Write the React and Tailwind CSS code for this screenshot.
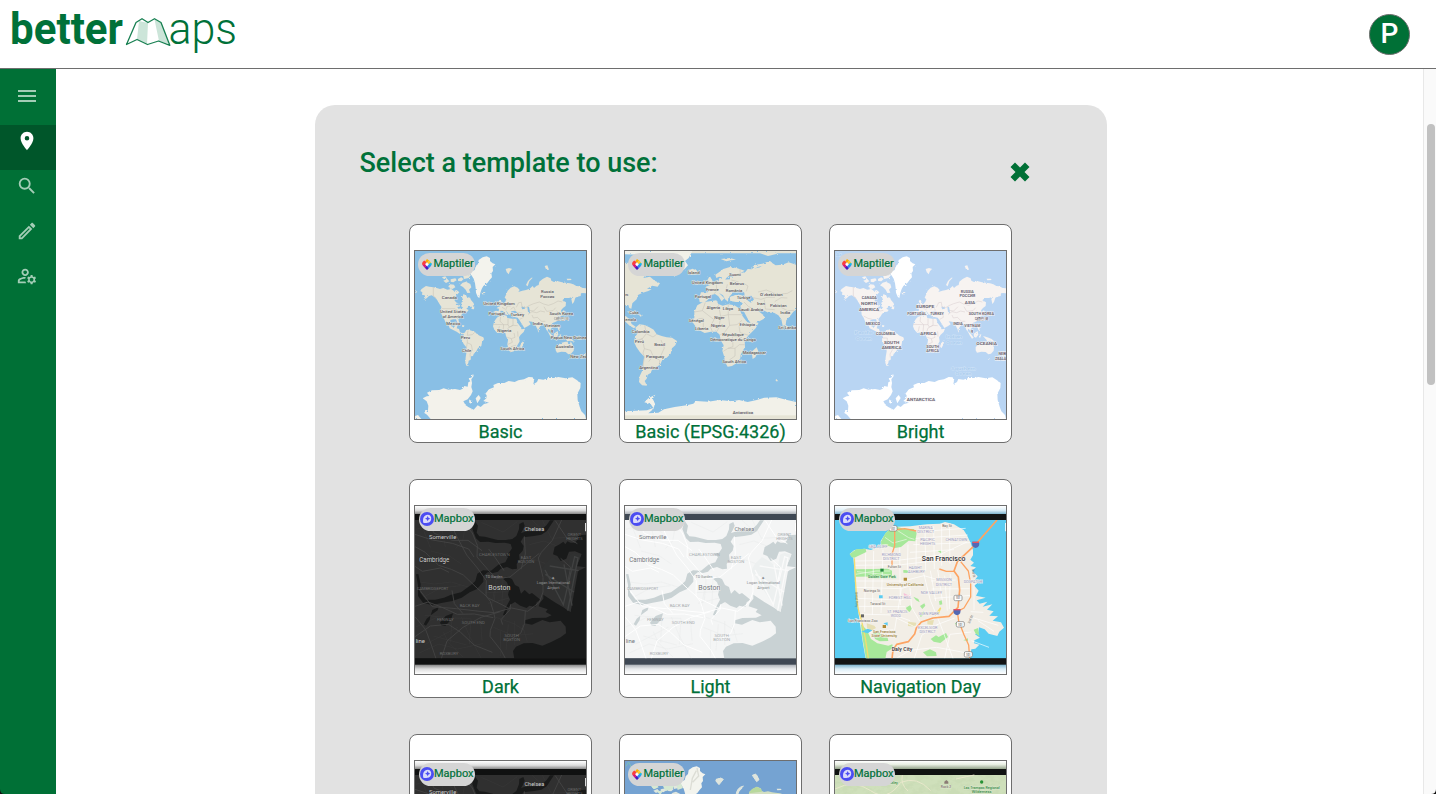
import React from 'react';
import { MdMenu, MdPlace, MdSearch, MdOutlineEdit, MdOutlineManageAccounts } from 'react-icons/md';

// Label rows: [centre x, baseline y, text, drawn width, optional size]
function Labels({ items, fill, halo, weight = 500, size = 12 }) {
  return (
    <g fontFamily="Roboto, sans-serif" textAnchor="middle" fill={fill} fontWeight={weight} stroke={halo} strokeWidth={halo ? 2.5 : 0} style={{ paintOrder: 'stroke' }}>
      {items.map(([x, y, t, w, s]) => (
        <text key={t + x + y} x={x} y={y} fontSize={s || size} textLength={w} lengthAdjust="spacingAndGlyphs">{t}</text>
      ))}
    </g>
  );
}

const AMERICAS =
  'M52 214L58 209 66 204 76 206 88 208 98 210 108 213 118 210 130 215 142 213 150 219 158 216 166 223 158 231 152 238 152 248 158 254 166 256 168 265 172 264 172 254 178 248 174 238 178 229 186 231 190 240 197 236 201 246 208 254 211 260 203 266 193 267 187 272 194 276 190 281 180 282 174 288 170 295 163 303 165 312 164 318 159 312 156 304 147 304 139 307 138 315 142 325 150 328 155 321 161 321 158 331 165 333 168 343 176 346 182 344 187 336 193 335 203 338 212 341 219 348 227 353 238 358 240 364 234 373 232 384 222 390 216 401 209 408 207 414 201 415 200 425 194 428 193 435 189 440 196 444 187 443 184 434 185 418 188 400 187 388 179 378 174 367 175 358 180 349 168 348 158 341 146 335 137 331 133 319 126 308 126 315 130 320 124 312 119 299 113 290 112 278 112 266 106 257 99 245 92 238 83 232 75 234 68 241 58 247 64 240 62 232 54 230 55 223 49 219z';
const GREENLAND = 'M196 164L205 159 212 156 215 145 222 138 224 126 236 118 248 115 258 120 258 129 266 136 274 139 266 147 267 159 262 166 264 178 256 187 250 195 238 204 233 213 229 225 226 240 221 236 216 224 215 210 213 196 209 182 202 171z';
const ISLES =
  'M118 188L130 183 136 190 126 195zM133 205L139 199 150 200 154 208 145 213 136 211zM163 182L172 178 179 183 172 190 162 189zM177 172L190 165 201 171 194 180 180 183zM176 194L186 191 199 198 202 208 195 215 199 224 190 225 185 215 177 207 168 202zM140 184L154 181 158 187 148 193 140 191zM114 178L124 175 128 180 118 182zM204 267L211 265 210 274 202 273zM233 223L244 222 242 229 234 229zM305 153L315 150 325 153 318 159 314 169 308 162zM366 201L372 189 382 179 386 179 376 190 371 205zM422 144L430 142 435 155 427 156zM488 182L500 182 503 186 490 187zM33 216L40 222 34 225zM284 250L289 244 293 253 297 264 286 268 290 260zM279 259L285 256 284 263 279 264zM352 375L361 366 358 380 352 391 348 385zM431 339L441 348 449 359 444 362 437 352zM449 347L461 339 463 350 456 359 450 356zM466 350L472 349 468 361 465 356zM461 322L467 330 466 338 462 334zM477 354L490 358 503 363 513 372 499 368 490 370 483 361zM461 291L468 288 476 281 480 275 482 284 476 292 465 297zM154 315L165 316 171 322 163 320zM174 322L181 322 180 327 174 326zM401 335L405 338 403 344zM541 404L546 407 538 420 532 424 539 413zM492 420L497 421 494 427z';
const EURASIA =
  'M268 281L276 278 284 280 285 272 278 271 282 267 292 263 298 258 304 251 307 244 302 239 307 228 311 218 320 209 331 205 341 209 347 216 343 222 355 218 366 216 377 212 386 204 390 210 398 203 404 201 406 191 416 183 429 176 440 181 442 188 450 192 462 190 474 193 485 194 498 196 508 199 517 204 526 205 536 210 546 211 546 226 537 225 531 226 530 234 520 236 514 239 510 252 505 258 502 243 508 236 495 240 483 240 475 247 486 253 485 264 477 270 471 277 473 287 466 283 460 281 455 287 462 293 464 301 461 308 452 313 444 316 447 326 441 332 439 339 433 331 431 340 436 348 426 334 424 324 417 317 409 324 402 337 396 325 394 315 384 311 374 310 380 319 371 325 361 330 354 319 346 306 341 299 331 297 324 298 322 289 326 286 335 286 342 285 333 278 322 280 320 288 315 291 309 281 305 277 312 290 305 290 297 279 290 278 287 287 277 292 269 290z M318 249L323 245 322 235 329 224 335 220 333 232 341 238 335 246 325 247 322 255 312 260 315 252z';
const AFRICA = 'M282 296L297 292 308 293 310 300 325 302 337 302 341 315 348 325 353 334 363 332 359 342 350 350 345 358 347 370 341 380 337 388 330 400 319 403 314 395 310 379 312 367 306 354 304 345 292 343 280 345 271 335 267 325 270 312 276 302z';
const AUSTRALIA = 'M455 387L464 379 473 374 484 371 492 371 491 377 498 379 500 370 505 379 510 388 509 398 501 407 493 409 485 402 472 401 459 404 455 397z';
const ANTARCTICA =
  'M80 603L69 590 60 584 72 577 73 563 68 550 56 541 68 535 76 534 69 524 84 517 106 516 119 511 133 515 153 513 168 516 176 512 181 504 191 506 193 493 199 490 194 482 203 478 207 467 209 474 202 484 204 495 202 507 206 520 201 531 191 544 178 550 185 562 194 568 209 575 221 562 230 567 240 558 255 554 238 549 247 541 248 532 244 527 255 514 270 508 268 501 282 495 301 495 314 489 332 492 343 487 360 484 374 477 386 478 390 488 388 499 399 492 403 483 418 485 433 480 450 480 463 477 485 481 505 478 518 486 530 495 529 510 520 527 521 546 527 566 532 580 543 591 546 603z M195 546L205 548 203 558 196 554zM215 541L224 531 230 540 220 556z M33 594L42 591 52 603 33 603z';
const BORDERS =
  'M88 207L88 234 97 241M113 272L152 272 163 280 178 277M119 294L132 301 145 304M192 338L190 352 205 350 212 343M176 360L190 360 190 374 202 380 205 396 198 408 199 419M190 374L187 390M290 296L288 310 299 320 312 320 312 301M327 302L327 322 316 327 312 320M267 319L299 320M283 340L286 325M299 320L297 341M308 342L312 330 327 322 341 323M310 358L322 362 325 373 312 379M330 345L333 358 322 362M320 402L321 386 334 382M341 340L342 356M337 268L344 254 352 253 354 267 365 269 377 262 389 257 406 252 419 258 433 262 448 257 462 249 475 252M372 289L384 281 398 284 410 279 423 282M374 277L389 279 402 266M384 291L388 300 400 298 413 310 424 310M420 266L428 280 447 278 455 269M337 283L356 286 358 298 347 304M320 274L329 267 334 277M305 276L310 264 320 264M294 268L303 273';

function WorldMap({ bright }) {
  const land = bright ? '#f7f3f1' : '#e6e4d6';
  return (
    <svg viewBox="33 99 513 504" className="block size-full">
      <defs>
        <filter id={bright ? 'coastB' : 'coastA'} x="0" y="0" width="100%" height="100%">
          <feTurbulence type="fractalNoise" baseFrequency="0.16" numOctaves="2" seed="4" />
          <feDisplacementMap in="SourceGraphic" scale="7" />
        </filter>
      </defs>
      <rect x="33" y="99" width="513" height="504" fill={bright ? '#b9d5f3' : '#89bfe5'} />
      <g filter={bright ? 'url(#coastB)' : 'url(#coastA)'}>
        <g fill={land}>
          <path d={AMERICAS} /><path d={ISLES} /><path d={EURASIA} /><path d={AFRICA} /><path d={AUSTRALIA} />
        </g>
        <path d={GREENLAND} fill={bright ? '#fff' : '#f3f3ed'} />
        <path d={ANTARCTICA} fill={bright ? '#fff' : '#f3f2eb'} />
        <path d="M155 258l11-3 4 5-13 1zM352 267l9-2 2 7-8 2zM370 267l5 0 3 14-6 1zM160 267l12-2 6 5-15 2z" fill={bright ? '#b9d5f3' : '#89bfe5'} />
      </g>
      <path d={BORDERS} fill="none" stroke={bright ? '#d9cecf' : '#c6c2b8'} strokeWidth="1.6" />
      {bright ? (
        <>
          <Labels weight={700} fill="#6a6774" halo="#f8f5f5" size={12} items={[
            [136, 243, 'CANADA', 45, 10], [135, 262, 'NORTH', 48, 13], [135, 278, 'AMERICA', 60, 13], [147, 321, 'MEXICO', 44, 10], [185, 350, 'COLOMBIA', 58, 10],
            [203, 377, 'SOUTH', 46, 13], [203, 393, 'AMERICA', 60, 13], [304, 270, 'EUROPE', 54, 13], [278, 291, 'PORTUGAL', 57, 10], [339, 292, 'TURKEY', 41, 10],
            [313, 352, 'AFRICA', 48, 13], [326, 389, 'SOUTH', 38, 10], [326, 403, 'AFRICA', 38, 10], [430, 224, 'RUSSIA', 39, 10], [430, 238, 'РОССИЯ', 47, 11],
            [438, 258, 'ASIA', 31, 13], [472, 291, 'SOUTH KOREA', 76, 10], [472, 305, '대한민국', 40, 11], [402, 321, 'INDIA', 29, 10], [445, 328, 'VIETNAM', 48, 10], [444, 341, 'g', 6, 10],
            [488, 382, 'OCEANIA', 62, 12], [535, 412, 'NEW', 23, 10], [530, 425, 'ZEALA', 34, 10], [291, 549, 'ANTARCTICA', 85, 12]]} />
          <Labels fill="#a9cbed" halo="#cfe3f8" size={13} items={[[119, 348, 'Pacific', 55], [119, 365, 'Ocean', 48], [390, 361, 'Indian', 49], [390, 378, 'Ocean', 48], [418, 455, 'Southern', 74], [418, 471, 'Ocean', 48], [44, 115, 'Ar', 16]]} />
        </>
      ) : (
        <Labels fill="#5b5960" halo="#e9e9e1" size={11.5} items={[
          [136, 244, 'Canada', 45], [147, 285, 'United States', 78], [147, 299, 'of America', 62], [148, 321, 'Mexico', 42], [184, 363, 'Peru', 28], [188, 402, 'Chile', 28],
          [285, 261, 'United Kingdom', 95], [278, 291, 'Portugal', 49], [340, 294, 'Turkey', 41], [301, 341, 'Nigeria', 42], [325, 397, 'South Africa', 72],
          [430, 225, 'Russia', 38], [430, 239, 'Россия', 42], [472, 291, 'South Korea', 71], [472, 306, '대한민국', 46], [401, 321, 'India', 30], [445, 328, 'Vietnam', 48], [444, 342, 'g', 6],
          [494, 362, 'Papua New Guinea', 107], [482, 391, 'Australia', 53], [524, 419, 'New Zea', 51]]} />
      )}
    </svg>
  );
}

function PlateMap() {
  return (
    <svg viewBox="33 99 513 504" className="block size-full">
      <defs>
        <filter id="coastC" x="0" y="0" width="100%" height="100%">
          <feTurbulence type="fractalNoise" baseFrequency="0.15" numOctaves="2" seed="8" />
          <feDisplacementMap in="SourceGraphic" scale="7" />
        </filter>
      </defs>
      <rect x="33" y="99" width="513" height="504" fill="#89bfe5" />
      <g filter="url(#coastC)" fill="#e6e4d6">
        <path d="M20 135L40 134 54 143 60 138 80 132 98 140 112 150 126 157 120 166 104 162 95 171 88 180 108 176 122 188 138 196 131 206 115 203 99 212 113 214 103 219 84 225 72 231 68 244 55 256 52 272 46 270 43 261 20 262zM62 177L82 173 92 183 86 194 80 205 76 195 65 187z" />
        <path d="M38 281L52 280 73 288 56 288zM73 289L87 291 80 296zM20 286L38 296 48 306 53 318 65 326 60 331 47 323 33 310 20 306z" />
        <path d="M64 329L76 319 92 321 106 328 119 335 128 349 143 354 158 358 174 359 189 369 184 382 174 391 170 407 158 419 145 425 138 441 125 447 114 455 110 465 101 470 98 482 92 489 99 503 84 502 75 492 77 475 84 460 87 435 91 416 78 403 67 387 60 371 63 357 71 346z" />
        <path d="M250 262L266 253 288 250 307 247 313 258 326 263 343 259 361 262 374 270 386 295 399 312 411 316 434 314 425 331 404 352 392 367 393 387 386 399 380 410 379 421 365 437 354 444 341 446 334 434 330 414 325 398 329 382 320 367 317 350 308 341 291 341 272 345 256 337 246 327 236 313 241 299 241 281z" />
        <path d="M413 401L428 388 433 400 424 418 416 423zM255 241L261 223 282 223 286 215 273 207 291 200 302 191 314 190 315 180 326 185 348 184 348 177 360 174 354 166 337 180 331 188 321 186 324 178 315 176 307 180 304 170 315 163 328 153 348 147 368 150 392 158 379 166 394 162 401 153 412 154 438 148 451 137 466 130 485 142 505 140 524 133 546 140 546 275 538 281 530 292 517 307 515 321 506 323 502 304 493 292 480 284 463 284 446 276 433 279 451 293 450 302 428 314 412 319 402 304 390 281 379 266 383 252 366 252 349 249 347 238 355 233 371 229 391 233 390 224 376 219 369 221 364 215 354 227 348 234 343 240 342 251 333 244 327 232 315 225 331 241 323 250 313 235 303 228 292 231 282 245 270 254 257 252z" />
        <path d="M280 187L287 174 294 185 299 198 284 202 287 193zM267 193L278 188 278 198 269 199zM222 158L235 152 251 158 246 168 230 170zM320 123L348 120 366 125 351 127 337 130zM410 151L424 140 445 137 468 129 476 136 455 141 431 147 420 154zM438 106L476 102 490 107 462 114zM513 321L522 325 519 334 512 330zM486 482L493 490 485 489zM33 99H546V106H33z" />
        <path d="M33 99H235L224 120 213 129 222 142 212 153 195 164 182 176 171 160 150 150 128 133 98 111 33 109z" fill="#f1f1e9" />
        <path d="M395 236L412 233 420 244 411 254 400 247zM355 222L377 216 391 224 391 234 369 228 354 235z" fill="#89bfe5" />
        <path d="M33 580L68 578 99 577 118 570 110 558 91 553 104 540 124 530 116 542 123 557 118 573 103 586 133 584 150 574 182 567 218 562 238 557 246 549 282 551 316 546 354 550 375 546 401 552 428 546 451 539 487 538 516 545 546 552V603H33z" fill="#f2f1e9" />
      </g>
      <rect x="33" y="592" width="513" height="11" fill="#e6e4d6" />
      <path d="M92 322L97 347 85 362 66 374M128 349L117 357 97 347M61 369L85 362 91 392 110 397 117 414 104 431M91 392L87 405 91 416 86 454M117 414L137 427 136 441M141 366L151 390 140 414M274 253L265 278 300 305 320 295 313 259M343 260L343 290 320 295M343 290L383 290M241 282L265 278M300 305L289 325 295 341M320 295L315 329 308 341M251 302L268 301 268 331M343 290L347 322 369 320 384 307M347 322L332 343 318 351M355 353L357 386 342 391M384 359L356 354M375 323L378 344 404 352M328 400L342 391 363 391 363 414 346 426M363 391L376 380 392 380M366 202L389 196 402 204 397 220M432 222L457 216 489 229 520 226 535 218M390 252L404 266 431 277M417 239L441 244 459 238 483 238M451 245L454 273 482 275M482 251L501 239 520 240M501 268L520 278 540 277M340 199L336 216 349 225M307 196L308 218 300 228M374 192L352 186M357 173L379 166 378 153" fill="none" stroke="#c7c3b9" strokeWidth="1.6" />
      <Labels fill="#5b5960" halo="#e9e9e1" size={11.5} items={[
        [239, 168, 'Ísland', 36], [363, 174, 'Suomi', 35], [280, 197, 'United Kingdom', 93], [369, 201, 'Belarus', 43], [295, 220, 'France', 38], [360, 221, 'România', 49],
        [267, 239, 'Portugal', 49], [389, 242, 'Türkiye', 42], [472, 235, 'Oʻzbekiston', 68], [441, 260, 'Iran', 24], [493, 266, 'Pakistan', 50], [298, 274, 'Algeria', 41], [342, 277, 'Libya', 31],
        [410, 280, 'Saudi Arabia', 74], [514, 289, 'India', 30], [316, 303, 'Niger', 31], [247, 312, 'Sénégal', 45], [312, 326, 'Nigeria', 42], [400, 324, 'Ethiopia', 47], [263, 337, 'Liberia', 40],
        [520, 332, 'Sri Lanka', 54], [357, 354, 'République', 65], [357, 369, 'Démocratique du Congo', 137], [421, 408, 'Madagascar', 70], [361, 436, 'South Africa', 71],
        [80, 344, 'Colombia', 53], [76, 374, 'Perú', 27], [137, 383, 'Brasil', 33], [123, 420, 'Paraguay', 54], [104, 453, 'Argentina', 57], [60, 288, 'Cuba', 28], [50, 308, 'emala', 32], [38, 233, 'es', 9], [387, 588, 'Antarctica', 61]]} />
    </svg>
  );
}

const WATER =
  'M212 140L222 155 218 176 226 187 243 188 260 193 281 198 306 198 325 195 337 186 345 166 346 150 358 144 362 155 356 169 351 177 372 171 395 171 415 165 428 153 438 139 450 139 437 158 429 171 412 182 390 186 358 190 350 203 359 216 356 230 345 242 347 257 338 270 339 284 325 286 309 279 290 284 282 293 267 297 252 294 238 306 238 323 219 345 197 355 173 371 145 381 116 386 84 393 57 386 42 366 42 333 36 301 43 300 50 331 48 355 65 377 94 377 120 371 141 362 171 355 201 333 214 321 220 299 237 289 261 290 285 271 304 265 312 249 300 239 315 236 324 223 320 210 302 206 275 207 253 203 228 204 216 193 205 165zM546 182L526 184 519 178 524 192 513 206 500 206 490 202 484 211 478 203 467 211 452 219 447 241 460 246 470 261 487 254 495 233 513 232 533 240 525 260 515 276 546 280zM546 280L522 291 500 413 451 384 418 362 418 374 407 388 404 397 431 406 425 414 443 424 426 431 385 432 363 439 362 448 384 452 415 438 437 445 470 440 485 458 486 478 470 490 440 505 415 515 386 507 359 508 336 518 327 531 331 554 546 554zM316 344L309 325 298 315 309 308 324 315 333 333 345 339 351 359 362 348 376 361 384 357 402 371 409 377 398 385 394 399 376 395 368 402 349 395 333 384 321 391 312 402 303 426 297 422 308 396 318 377 312 362zM59 451L68 434 79 425 77 438 66 455zM108 446L125 426 147 418 142 436 124 456 113 455zM85 408L104 399 101 409 80 424z';
const ROADS =
  'M33 218L64 235 104 274 142 286 178 303 219 342 254 373 294 392 312 402M139 139L153 177 188 243 220 282 247 320 246 366 259 382 268 412 273 433 259 469 258 487 291 529 304 553M44 344L85 398 157 404 219 411 271 416 323 402 371 412 406 385 417 354 417 310 403 252 412 235 445 199 473 138M173 139L205 177 220 214 219 249 251 286 277 314 318 309 352 281 406 238M33 277L55 292 109 282 135 295M33 397L72 384 112 399 160 421 211 420 268 431M33 488L79 456 133 451 170 475 210 513 265 535M112 554L129 501 177 460 231 430 289 413M33 428L65 467 80 507 96 554M144 349L151 389 177 419M320 391L318 407 291 437 296 452M364 410L362 448 350 478 309 502M361 187L364 240 351 286M254 225L273 250 300 290M33 181L85 198 145 208 194 225 210 249M67 139L91 178 145 199 192 199 234 230M470 253L500 280 490 330M454 140L487 190 520 209';
const STREETS =
  'M36 166L97 149 145 176M81 231L135 245 172 270M39 323L91 330 142 324 215 346M55 371L110 342 170 335M62 424L139 432 201 433M46 537L105 510 160 525 237 509M118 473L133 506 177 549M144 422L140 505M172 429L196 485 232 554M201 434L196 511M229 430L234 500M64 511L163 459M88 486L188 513M35 459L99 430M268 460L330 485 387 479M276 430L330 449 361 469M290 469L289 547M313 451L306 529M332 441L332 513M355 453L370 504M232 145L297 174 340 143M384 139L411 163M376 212L420 201 474 222M370 250L447 276M415 138L442 193 495 190M185 151L176 201 154 224M110 145L124 219M52 151L79 221M277 331L309 342 335 389M245 356L311 353M252 388L321 371M262 401L272 344M277 305L271 380M297 311L294 391';

function BostonMap({ dark }) {
  const land = dark ? '#303030' : '#f4f5f5';
  const water = dark ? '#191a1a' : '#c9d2d4';
  const road = dark ? '#444444' : '#ffffff';
  return (
    <svg viewBox="33 96 513 504" className="block size-full">
      <defs>
        <linearGradient id={dark ? 'fadeD' : 'fadeL'} x1="0" y1="0" x2="0" y2="1">
          <stop offset="0" stopColor="#fff" /><stop offset=".5" stopColor={dark ? '#ddd' : '#e9ebed'} /><stop offset="1" stopColor={dark ? '#777' : '#a4a9b0'} />
        </linearGradient>
      </defs>
      <rect x="33" y="96" width="513" height="504" fill="#fff" />
      <rect x="33" y="96" width="513" height="26" fill={dark ? 'url(#fadeD)' : 'url(#fadeL)'} />
      <rect x="33" y="-600" width="513" height="30" transform="scale(1 -1)" fill={dark ? 'url(#fadeD)' : 'url(#fadeL)'} />
      <rect x="33" y="120" width="513" height="452" fill={dark ? '#101111' : '#3f4854'} />
      <svg x="33" y="138" width="513" height="415" viewBox="33 138 513 415">
        <rect x="33" y="138" width="513" height="416" fill={land} />
        <path d={STREETS} fill="none" stroke={dark ? '#3b3b3b' : '#e8eaeb'} strokeWidth="1.5" />
        <path d={WATER} fill={water} />
        <path d="M498 242L512 236 531 242 517 281 500 414 485 405 421 304 410 292 423 269 444 249 468 263 491 281z" fill={dark ? '#303131' : '#edf0f0'} />
        <path d="M423 288L478 392 512 248 522 252 491 410M437 276L524 290M424 301L510 354M480 271L504 395" fill="none" stroke={dark ? '#414242' : '#fafafa'} strokeWidth="4" />
        <path d={ROADS} fill="none" stroke={road} strokeWidth="2.7" strokeLinejoin="round" />
        <path d="M546 147V172" stroke={dark ? '#ddd' : '#fff'} strokeWidth="6" />
      </svg>
      <Labels weight={400} fill={dark ? '#d0d0d0' : '#72767c'} halo={dark ? '#2b2b2b' : '#f7f7f7'} size={17} items={[
        [391, 171, 'Chelsea', 59], [116, 194, 'Somerville', 82], [91, 265, 'Cambridge', 90, 19], [286, 348, 'Boston', 66, 23], [49, 506, 'line', 28, 16]]} />
      <Labels weight={400} fill={dark ? '#999' : '#858a8e'} size={11} items={[
        [448, 331, 'Logan International', 99, 11], [448, 344, 'Airport', 37, 11], [448, 319, '✦', 12, 14], [270, 312, 'TD Garden', 51, 10]]} />
      <Labels weight={400} fill={dark ? '#686969' : '#a7acaf'} size={12} items={[
        [271, 246, 'CHARLESTOWN', 92], [366, 255, 'EAST', 32], [366, 268, 'BOSTON', 50], [511, 185, 'ORIENT', 41], [511, 197, 'HEIGHTS', 49], [86, 348, 'CAMBRIDGEPORT', 94, 11], [197, 398, 'BACK BAY', 60],
        [124, 440, 'FENWAY', 50], [208, 451, 'SOUTH END', 69], [323, 488, 'SOUTH', 43], [323, 501, 'BOSTON', 50], [135, 543, 'ROXBURY', 56]]} />
    </svg>
  );
}

function Frisco() {
  return (
    <svg viewBox="33 96 513 504" className="block size-full">
      <defs>
        <linearGradient id="fadeN" x1="0" y1="0" x2="0" y2="1">
          <stop offset="0" stopColor="#fff" /><stop offset=".5" stopColor="#dceef7" /><stop offset="1" stopColor="#6ca9c6" />
        </linearGradient>
      </defs>
      <rect x="33" y="96" width="513" height="504" fill="#fff" />
      <rect x="33" y="96" width="513" height="26" fill="url(#fadeN)" />
      <rect x="33" y="-600" width="513" height="30" transform="scale(1 -1)" fill="url(#fadeN)" />
      <rect x="33" y="120" width="513" height="452" fill="#121414" />
      <svg x="33" y="138" width="513" height="415" viewBox="33 138 513 415">
        <rect x="33" y="138" width="513" height="416" fill="#5accf2" />
        <path d="M77 240L91 228 121 224 141 228 155 221 170 223 170 201 185 178 198 164 219 158 259 157 282 154 309 151 347 149 363 144 390 151 402 158 419 168 429 184 441 209 447 229 447 244 439 257 450 266 439 276 456 280 444 290 461 307 453 317 463 324 451 335 464 350 456 365 485 371 458 379 467 389 490 383 476 398 505 391 489 407 509 412 496 425 522 427 506 440 531 445 540 461 526 473 520 486 494 479 482 466 465 460 463 475 453 481 468 491 451 499 450 508 466 512 454 524 442 526 438 554 125 554 118 515 111 470 107 442 101 400 96 361 92 298 88 252z" fill="#f2eee6" />
        <path d="M184 178L201 163 221 159 240 164 269 165 278 176 274 202 254 200 231 219 212 222 194 216 173 222 171 203zM77 240L97 226 125 224 127 234 91 251 83 250zM92 286L192 284 204 290 204 307 95 308zM238 288L254 289 253 297 238 296zM111 450L128 467 141 495 160 508 193 515 205 511 207 522 188 534 184 554 126 554 115 490zM147 479L162 469 170 481 191 491 193 501 167 502 153 495zM320 495L336 484 344 489 366 477 372 489 349 507 329 503zM297 535L318 526 336 535 338 546 309 547zM246 401L258 394 264 403 257 414 248 409zM288 396L301 388 304 395 295 405zM286 420L300 412 303 420 290 429zM449 467L462 462 466 486 455 479zM418 499L432 493 432 501zM345 382L353 379 355 391 347 393zM393 448L401 444 400 459zM268 368L283 375 287 385 276 379zM341 231L352 228 353 239z" fill="#a7e89a" />
        <path d="M212 164L254 191 271 196M183 190L207 207 248 196M99 293L200 303M94 301L156 291 199 291" stroke="#d8f4cf" strokeWidth="3" fill="none" />
        <path d="M128 448L151 455 156 462 142 470 129 461zM252 443L277 446 274 458 252 456zM310 440L330 438 326 453 310 451z" fill="#e7dfb4" />
        <path d="M239 357L253 364 263 360 258 374 241 371z" fill="#f6bfd8" />
        <g stroke="#fff" strokeWidth="2" fill="none">
          <path d="M91 261L221 259 343 244 429 204M91 274L233 272 353 258M92 321L237 321 300 305 345 318M94 340L231 344 276 330M97 373L233 378 263 361M101 397L244 398M104 420L211 423 258 440M214 430L269 457 334 454 392 432M125 236L122 414M149 231L145 423M177 227L171 417M227 221L229 393M252 211L250 290M277 198L276 277M303 159L305 290M329 157L331 285M353 150L353 275M376 150L378 269M282 173L425 163M275 193L431 183M268 212L440 206M258 235L390 227M297 290L319 379 349 451 387 554M319 290L335 381M341 287L355 379M362 305L370 410M379 300L376 405M321 321L395 318M323 345L437 344M331 373L441 364M220 551L258 529 338 520 435 538M271 553L293 484 343 451M362 553L378 481 442 474M442 500L495 520M446 431L523 454M440 413L478 415M450 330L450 408M462 440L510 472M232 345L212 468M258 341L263 401 287 441M132 476L208 467" />
        </g>
        <path d="M91 253C94 300 94 370 105 415C116 447 126 500 133 554M343 419L350 401 333 425" fill="none" stroke="#f3dc72" strokeWidth="4" />
        <g fill="none" stroke="#fda463" strokeWidth="5" strokeLinejoin="round">
          <path d="M519 138L455 211 400 263 390 291 403 309 407 348 402 400 375 427 327 432 292 444 277 462 272 480 253 503 218 511 207 528 204 554" />
          <path d="M204 276L204 240 212 215 212 168 242 164 277 171M346 285L367 292 391 292M410 263L433 291 440 329 440 369 420 402 400 413 404 441 420 482 434 513 437 554" strokeWidth="4" />
        </g>
        <path d="M112 473l19-9 14 5-13 9zM178 448l13-3v10zM165 364h11v9h-11z" fill="#5accf2" />
        <path d="M546 147V172" stroke="#fff" strokeWidth="5" />
      </svg>
      {[[207, 163], [402, 372], [409, 451], [433, 541]].map(([x, y]) => (
        <g key={x}>
          <rect x={x - 12} y={y - 8} width="24" height="16" rx="4" fill="#fff" stroke="#777" strokeWidth="2" />
          <Labels items={[[x, y + 4, '101', 14]]} fill="#555" size={9} />
        </g>
      ))}
      {[[455, 212], [399, 414]].map(([x, y]) => (
        <g key={x}>
          <path d={`M${x - 10} ${y - 9}H${x + 10}Q${x + 14} ${y + 7} ${x} ${y + 10}Q${x - 14} ${y + 7} ${x - 10} ${y - 9}z`} fill="#5269b4" />
          <path d={`M${x - 10} ${y - 7}H${x + 10}`} stroke="#e95461" strokeWidth="4" />
        </g>
      ))}
      <path d="M169 284h10v9h-10z" fill="#238a3c" /><path d="M239 311h10v9h-10zM176 453h10v9h-10z" fill="#b18b36" /><path d="M111 421h9v9h-9z" fill="#666" />
      <Labels fill="#2d2d34" halo="#fffaf4" size={21} items={[[359, 261, 'San Francisco', 131], [234, 532, 'Daly City', 62, 17]]} />
      <Labels weight={400} fill="#9698bd" halo="#faf6f1" size={12} items={[
        [305, 164, 'MARINA', 42], [305, 176, 'DISTRICT', 51], [311, 202, 'PACIFIC', 44], [311, 214, 'HEIGHTS', 46], [397, 202, 'CHINATOWN', 65], [162, 222, 'SEA CLIFF', 57], [202, 245, 'RICHMOND', 57], [202, 257, 'DISTRICT', 50],
        [274, 285, 'HAIGHT', 40], [277, 298, 'ASHBURY', 50], [360, 322, 'MISSION', 46], [360, 335, 'DISTRICT', 49], [447, 326, 'DOGPATCH', 56], [322, 360, 'NOE VALLEY', 64], [228, 376, 'FOREST HILL', 68],
        [220, 416, 'ST. FRANCIS', 61], [215, 429, 'WOOD', 30], [314, 424, 'GLEN PARK', 61], [311, 464, 'EXCELSIOR', 58], [311, 476, 'DISTRICT', 49]]} />
      <Labels weight={400} fill="#5f5b57" halo="#faf6f1" size={10.5} items={[[369, 160, 'Bay St', 29], [211, 281, 'Fulton St', 40], [144, 353, 'Noriega St', 49], [161, 392, 'Taraval St', 46], [116, 444, 'San Francisco Zoo', 89]]} />
      <Labels fill="#34884b" halo="#d8f4cf" size={11} items={[[174, 311, 'Golden Gate Park', 84]]} />
      <Labels fill="#927b36" halo="#faf6f1" size={11} items={[[244, 335, 'University of California', 111], [181, 477, 'San Francisco', 68], [181, 490, 'State University', 77]]} />
      <g fontFamily="Roboto, sans-serif" fontSize="10" fill="#666"><text transform="translate(94 354) rotate(88)">Great Hwy</text><text transform="translate(444 285) rotate(83)">3rd St</text><text transform="translate(437 449) rotate(-66)">3rd St</text></g>
    </svg>
  );
}

function SatelliteWorld() {
  return (
    <svg viewBox="33 99 513 504" className="block size-full">
      <rect x="33" y="99" width="513" height="504" fill="#75a3d2" />
      <path d={AMERICAS} fill="#cfdcc6" /><path d={ISLES} fill="#e1e7df" /><path d={EURASIA} fill="#d3dfc2" />
      <path d={GREENLAND} fill="#f3f4ee" />
      <path d="M249 120L254 144 236 163M247 128L235 151 229 186" fill="none" stroke="#dcddd5" strokeWidth="4" />
      <path d="M110 173L127 168 134 178 120 184zM147 175L166 169 182 170 175 184 155 189zM186 167L200 164 207 180 191 186zM125 188l22 1-8 11z" fill="#d6e8d2" />
      <path d="M305 158l15-8 8 4-13 16zM366 202Q368 178 389 174M415 142l10-4 10 17-7 6z" fill="#dfe5dd" stroke="#dfe5dd" strokeWidth="3" />
      <path d="M404 196L414 183 428 176 442 183 444 191 430 193z" fill="#b8d89d" />
      <path d="M36 115L44 102 51 116" fill="none" stroke="#7fc0b4" strokeWidth="3" />
    </svg>
  );
}

function OutdoorsMap() {
  return (
    <svg viewBox="33 96 513 504" className="block size-full">
      <defs>
        <linearGradient id="fadeO" x1="0" y1="0" x2="0" y2="1"><stop offset="0" stopColor="#fff" /><stop offset=".4" stopColor="#e8efe2" /><stop offset="1" stopColor="#87977d" /></linearGradient>
        <filter id="hills" x="0" y="0" width="100%" height="100%">
          <feTurbulence type="fractalNoise" baseFrequency="0.04 0.06" numOctaves="4" seed="7" />
          <feColorMatrix values="0 0 0 0 .58  0 0 0 0 .7  0 0 0 0 .45  5 0 0 0 -2.1" />
        </filter>
      </defs>
      <rect x="33" y="96" width="513" height="504" fill="#fff" />
      <rect x="33" y="96" width="513" height="26" fill="url(#fadeO)" />
      <rect x="33" y="120" width="513" height="452" fill="#101311" />
      <rect x="33" y="138" width="513" height="415" fill="#cfe0bb" />
      <rect x="33" y="138" width="513" height="415" filter="url(#hills)" opacity=".6" />
      <path d="M33 180Q90 150 140 185T230 160Q280 140 320 185M235 138Q229 166 252 186M396 150Q430 142 451 138" fill="none" stroke="#e9e8cc" strokeWidth="3" />
      <path d="M361 158l6-5 6 5v6h-12z" fill="#8b7b75" /><circle cx="473" cy="159" r="5" fill="#269235" />
      <Labels fill="#8b7b75" halo="#dce7ce" size={10} items={[[366, 176, 'Rock 2', 31]]} />
      <Labels fill="#378a44" halo="#dce7ce" size={11} items={[[473, 179, 'Las Trampas Regional', 108], [473, 192, 'Wilderness', 60], [207, 166, 'Sibley', 29]]} />
    </svg>
  );
}

function Badge({ kind }) {
  const tiler = kind === 'Maptiler';
  return (
    <div className={`absolute top-[2px] flex h-[23px] items-center rounded-full bg-[#d5d5d5] ${tiler ? 'left-[3px] w-[57px] pl-[4px]' : 'left-[4px] w-[56px] pl-[1px]'}`}>
      {tiler ? (
        <svg viewBox="0 0 22 24" className="mr-[1.500px] h-[11px] w-[10px] shrink-0">
          <path d="M11 0L16 4 11 8 7 5z" fill="#ffae00" /><path d="M16 3L21 9 17 13 12 8z" fill="#ffc928" />
          <path d="M21 9Q23 12 19 16L14 12 18 8z" fill="#18bee9" /><path d="M20 15L15 20 10 15 15 11z" fill="#2e89f4" />
          <path d="M15 20L11 24 6 19 10 14z" fill="#491ac0" /><path d="M6 19L1 13 6 9 11 14z" fill="#d91578" /><path d="M1 13Q-2 8 5 3L10 7 6 12z" fill="#fb3f3b" /><path d="M11 8L15 12 11 16 7 12z" fill="#fff" />
        </svg>
      ) : (
        <svg viewBox="0 0 42 42" className="-mt-px h-[14px] w-[14px] shrink-0">
          <circle cx="21" cy="21" r="21" fill="#4b4df2" /><path d="M10 32C7 19 12 8 23 8c15 0 14 24-1 24-4 1-8 1-12 0z" fill="#d9dafa" /><path d="M23 12l2.500 5.500L31 20l-5.500 2.500L23 28l-2.500-5.500L15 20l5.500-2.500z" fill="#4b4df2" />
        </svg>
      )}
      <span className="-mt-[2px] text-[11px] leading-[14px] text-[#007139] [-webkit-text-stroke:0.2px_#007139]">{kind}</span>
    </div>
  );
}

const TEMPLATES = [
  { name: 'Basic', kind: 'Maptiler', map: <WorldMap /> },
  { name: 'Basic (EPSG:4326)', kind: 'Maptiler', map: <PlateMap /> },
  { name: 'Bright', kind: 'Maptiler', map: <WorldMap bright /> },
  { name: 'Dark', kind: 'Mapbox', map: <BostonMap dark /> },
  { name: 'Light', kind: 'Mapbox', map: <BostonMap /> },
  { name: 'Navigation Day', kind: 'Mapbox', map: <Frisco /> },
  { name: 'Navigation Night', kind: 'Mapbox', map: <BostonMap dark /> },
  { name: 'Ocean', kind: 'Maptiler', map: <SatelliteWorld /> },
  { name: 'Outdoors', kind: 'Mapbox', map: <OutdoorsMap /> },
];

function Card({ name, kind, map }) {
  return (
    <button className="flex h-[219px] w-[183px] flex-col items-center rounded-[8px] border border-[#6e6e6e] bg-white pt-[25px]">
      <div className="relative h-[170px] w-[173px] shrink-0 border border-[#6e6e6e]">
        {map}
        <Badge kind={kind} />
      </div>
      <span className="mt-px text-[18px] leading-[22px] text-[#007139] [-webkit-text-stroke:0.25px_#007139]">{name}</span>
    </button>
  );
}

function Logo() {
  return (
    <svg width="245" height="68" viewBox="0 0 245 68" fontFamily="Roboto, sans-serif" fill="#007139">
      <text x="10" y="44.300" fontSize="44" fontWeight="700" textLength="113" lengthAdjust="spacingAndGlyphs">better</text>
      <path d="M139 21L148 23 147 44 137 39.500zM154.500 19.500L161 22 169 44 159 41z" fill="#cce5d9" />
      <path d="M126.500 44.500L136 22.500 142 18.700 148 22.500 154.500 18.700 161 22.500 169.800 45.300 158.500 41 147.500 44.500 137 39.500z" fill="none" stroke="#188052" strokeWidth="1.3" strokeLinejoin="round" />
      <text x="168.500" y="44.300" fontSize="44" fontWeight="300" textLength="68.500" lengthAdjust="spacingAndGlyphs">aps</text>
    </svg>
  );
}

const NAV = [
  { Icon: MdPlace, active: true },
  { Icon: MdSearch },
  { Icon: MdOutlineEdit },
  { Icon: MdOutlineManageAccounts },
];

export default function App() {
  return (
    <div className="relative flex h-[794px] w-[1436px] flex-col overflow-hidden bg-white font-[Roboto,sans-serif]">
      <header className="flex h-[69px] shrink-0 items-center justify-between border-b border-[#6e6e6e] pr-[26px]">
        <Logo />
        <div className="flex size-[41px] items-center justify-center rounded-full border border-[#6e6e6e] bg-[#007036] pb-px text-[28px] font-medium leading-none text-white">P</div>
      </header>
      <div className="flex min-h-0 flex-1">
        <nav className="flex w-[56px] shrink-0 flex-col bg-[#007036] text-[#a3cdb6]">
          <div className="h-[56px] pl-[15px] pt-[15px]"><MdMenu size={24} /></div>
          {NAV.map(({ Icon, active }, i) => (
            <div key={i} className={`h-[45px] shrink-0 pl-[16px] pt-[5px] ${active ? 'bg-[#00562a] text-white' : ''}`}><Icon size={22} /></div>
          ))}
        </nav>
        <main className="flex-1 overflow-hidden pl-[259px] pt-[36px]">
          <section className="h-[900px] w-[792px] rounded-[20px] bg-[#e2e2e2]">
            <div className="flex h-[119px] justify-between pl-[44.500px] pr-[77px] pt-[41px]">
              <h1 className="text-[27px] font-medium leading-[34px] text-[#007139]">Select a template to use:</h1>
              <svg viewBox="0 0 20 20" className="mt-[16px] h-[20px] w-[20px]"><path d="M5 .5L10 5.500 15 .5 19.500 5 14.500 10 19.500 15 15 19.500 10 14.500 5 19.500 .5 15 5.500 10 .5 5z" fill="#007036" /></svg>
            </div>
            <div className="grid w-max grid-cols-3 gap-x-[27px] gap-y-[36px] pl-[94px]">
              {TEMPLATES.map((t) => <Card key={t.name} {...t} />)}
            </div>
          </section>
        </main>
        <div className="w-[13px] shrink-0 border-l border-[#e8e8e8] bg-[#fafafa] pl-[3px] pt-[55px]">
          <div className="h-[261px] w-[8px] rounded-full bg-[#c1c1c1]" />
        </div>
      </div>
      <svg viewBox="0 0 6 6" className="absolute bottom-0 left-0 size-[5px]"><path d="M0 0Q0 6 6 6H0z" fill="#111" /></svg>
      <svg viewBox="0 0 6 6" className="absolute bottom-0 right-0 size-[5px]"><path d="M6 0Q6 6 0 6H6z" fill="#111" /></svg>
    </div>
  );
}
